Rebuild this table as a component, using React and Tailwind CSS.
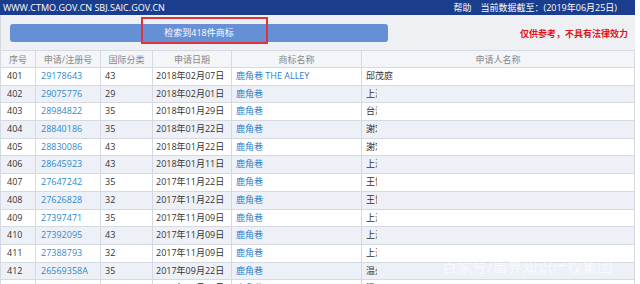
import React from 'react';

const rows = [
  ['401', '29178643', '43', '2018年02月07日', '鹿角巷 THE ALLEY', '邱茂庭', true],
  ['402', '29075776', '29', '2018年02月01日', '鹿角巷', '上海', false],
  ['403', '28984822', '35', '2018年01月29日', '鹿角巷', '台湾', false],
  ['404', '28840186', '35', '2018年01月22日', '鹿角巷', '謝宏', false],
  ['405', '28830086', '43', '2018年01月22日', '鹿角巷', '謝宏', false],
  ['406', '28645923', '43', '2018年01月11日', '鹿角巷', '上海', false],
  ['407', '27647242', '35', '2017年11月22日', '鹿角巷', '王博', false],
  ['408', '27626828', '32', '2017年11月22日', '鹿角巷', '王博', false],
  ['409', '27397471', '35', '2017年11月09日', '鹿角巷', '上海', false],
  ['410', '27392095', '43', '2017年11月09日', '鹿角巷', '上海', false],
  ['411', '27388793', '32', '2017年11月09日', '鹿角巷', '上海', false],
  ['412', '26569358A', '35', '2017年09月22日', '鹿角巷', '温州', false],
  ['413', '26569357', '43', '2017年09月22日', '鹿角巷', '温州', false],
];

export default function App() {
  return (
    <div className="relative w-[640px] h-[284px] overflow-hidden bg-white font-['Open_Sans','Noto_Sans_CJK_SC',sans-serif] text-[9px] text-[#333]">
      <div className="w-[635px]">
        {/* top bar */}
        <div className="h-[15px] bg-[#1b3d8e] text-white text-[9px] leading-[15px] flex items-center px-[3px] whitespace-nowrap">
          <span>WWW.CTMO.GOV.CN SBJ.SAIC.GOV.CN</span>
          <span className="ml-auto">帮助</span>
          <span className="ml-[9px] mr-[15px]">当前数据截至：(2019年06月25日)</span>
        </div>

        {/* search summary */}
        <div className="h-[35px] bg-[#eef0f4] border-l border-[#d5dae2] flex items-center pl-[9px] pr-[7px] relative">
          <div className="w-[378px] h-[18px] mt-[1px] rounded-[3px] bg-[#6690d6] text-white text-[9px] leading-[18px] text-center">
            检索到418件商标
          </div>
          <div className="absolute left-[140px] top-[2px] w-[127px] h-[27px] border-2 border-[#e2333b]"></div>
          <span className="ml-auto mt-[2px] text-[#e0141c] font-bold text-[9px]">仅供参考，不具有法律效力</span>
        </div>

        {/* table */}
        <div className="border-l border-r border-[#d5dae2] whitespace-nowrap">
          <div className="flex h-[18px] leading-[17px] bg-[#f3f5f8] text-[#888] border-t border-b border-[#d5dae2] text-center">
            <div className="w-[35px] border-r border-[#d5dae2]">序号</div>
            <div className="w-[65px] border-r border-[#d5dae2]">申请/注册号</div>
            <div className="w-[52px] border-r border-[#d5dae2]">国际分类</div>
            <div className="w-[79px] border-r border-[#d5dae2]">申请日期</div>
            <div className="w-[130px] border-r border-[#d5dae2]">商标名称</div>
            <div className="flex-1">申请人名称</div>
          </div>
          {rows.map((r, i) => (
            <div
              key={r[0]}
              className={`flex h-[17.7px] leading-[16.7px] border-b border-[#d5dae2] ${i % 2 === 0 ? 'bg-white' : 'bg-[#edf1f7]'}`}
            >
              <div className="w-[35px] pl-[6px] border-r border-[#d5dae2]">{r[0]}</div>
              <div className="w-[65px] pl-[5px] border-r border-[#d5dae2] text-[#2f8acb]">{r[1]}</div>
              <div className="w-[52px] pl-[4px] border-r border-[#d5dae2]">{r[2]}</div>
              <div className="w-[79px] pl-[3px] border-r border-[#d5dae2]">{r[3]}</div>
              <div className="w-[130px] pl-[4px] border-r border-[#d5dae2] text-[#2a80cc]">{r[4]}</div>
              <div className="flex-1 pl-[4px]">
                <span className={`inline-block overflow-hidden align-top ${r[6] ? '' : 'w-[11px]'}`}>{r[5]}</span>
              </div>
            </div>
          ))}
        </div>
      </div>
      <div className="absolute left-[442px] top-[257px] text-[15px] leading-[18px] text-white/60 pointer-events-none whitespace-nowrap">
        百家号/盾界知识产权集团
      </div>
    </div>
  );
}
